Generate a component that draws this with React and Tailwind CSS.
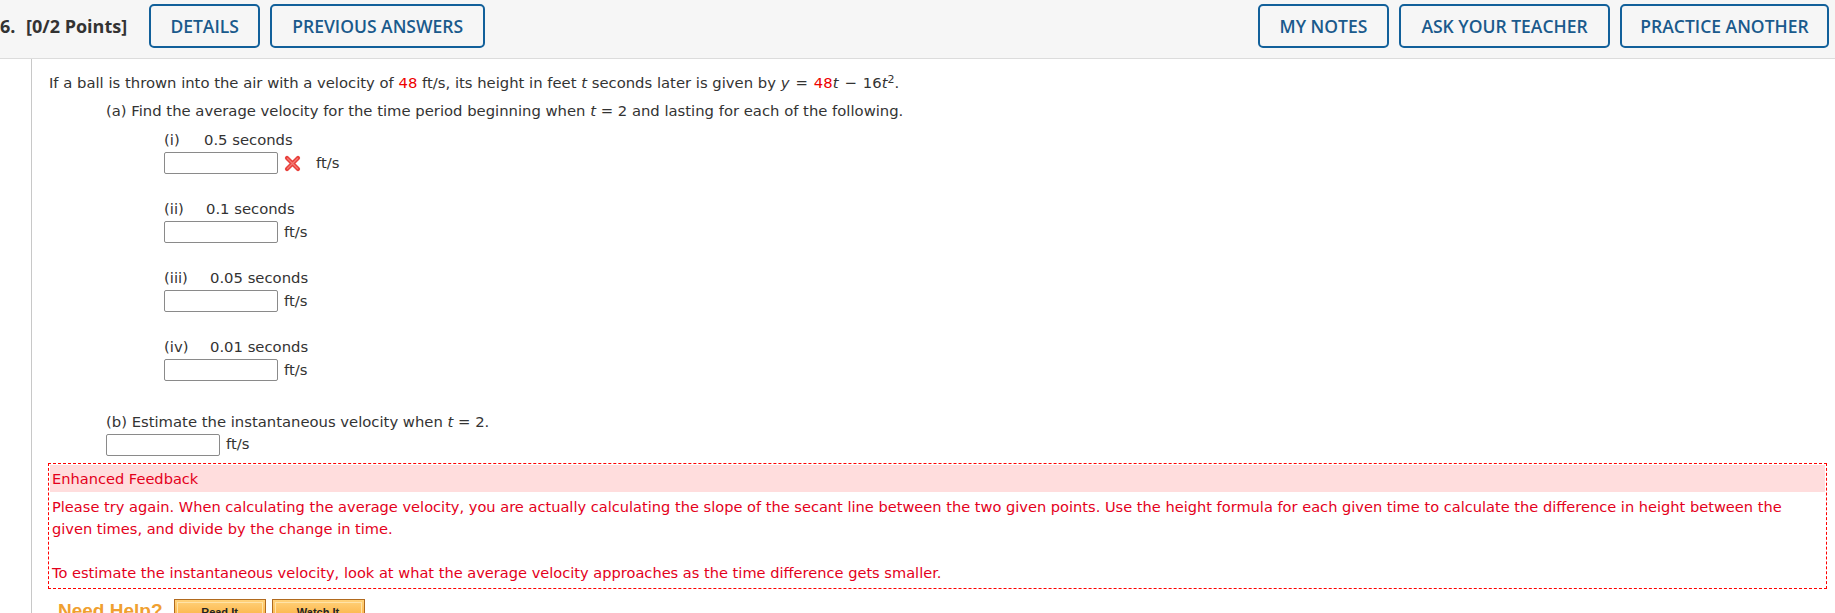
import React from 'react';

const body = { fontFamily: '"DejaVu Sans", Verdana, sans-serif' };
const head = { fontFamily: '"Open Sans", "Noto Sans", sans-serif' };
const arial = { fontFamily: '"Liberation Sans", Arial, sans-serif' };

function HeadButton({ children, className = '' }) {
  return (
    <div
      className={`h-[44px] flex items-center justify-center border-2 border-[#12609a] rounded-[5px] text-[#1a5a8c] text-[17.5px] font-semibold uppercase ${className}`}
    >
      {children}
    </div>
  );
}

function WrongMark() {
  return (
    <svg width="17" height="17" viewBox="0 0 17 17" className="ml-[6px]">
      <path d="M3 3 L14 14 M14 3 L3 14" stroke="#e8413c" strokeWidth="4.2" strokeLinecap="round" />
      <path d="M3.5 3.5 L13.5 13.5 M13.5 3.5 L3.5 13.5" stroke="#f47a74" strokeWidth="1.2" strokeLinecap="round" />
    </svg>
  );
}

function AnswerBox() {
  return <div className="w-[114px] h-[22px] border border-[#8a8a8a] rounded-[2px] bg-white shrink-0" />;
}

function Part({ roman, time, gap, wrong }) {
  return (
    <div className="mb-[24px]">
      <div className="h-[22px] leading-[22px] flex">
        <span className={gap}>{roman}</span>
        <span>{time}</span>
      </div>
      <div className="mt-[1px] h-[22px] flex items-center">
        <AnswerBox />
        {wrong ? (
          <>
            <WrongMark />
            <span className="ml-[15px]">ft/s</span>
          </>
        ) : (
          <span className="ml-[6px]">ft/s</span>
        )}
      </div>
    </div>
  );
}

function HelpButton({ children, className = '' }) {
  return (
    <div className={`h-[26px] border border-[#b06a1f] bg-gradient-to-b from-[#ffd27a] to-[#f9a623] p-[2px] ${className}`}>
      <div
        className="h-full border border-[#ffe3a8] text-[11px] font-bold text-center leading-[18px] text-[#222]"
        style={arial}
      >
        {children}
      </div>
    </div>
  );
}

export default function App() {
  return (
    <div className="w-[1835px] h-[613px] overflow-hidden bg-white text-[#333]">
      <header className="h-[59px] bg-[#f6f6f6] border-b border-[#dcdcdc] flex items-start pt-[4px] pr-[6px]" style={head}>
        <div className="h-[44px] flex items-center text-[18px] font-bold text-[#333] whitespace-nowrap">
          <span className="w-[26px]">6.</span>
          <span>[0/2 Points]</span>
        </div>
        <HeadButton className="ml-[22px] w-[111px]">Details</HeadButton>
        <HeadButton className="ml-[10px] w-[215px]">Previous Answers</HeadButton>
        <div className="flex-1" />
        <HeadButton className="w-[131px]">My Notes</HeadButton>
        <HeadButton className="ml-[10px] w-[211px]">Ask Your Teacher</HeadButton>
        <HeadButton className="ml-[10px] w-[209px]">Practice Another</HeadButton>
      </header>

      <div className="flex h-[554px]">
        <div className="w-[32px] border-r border-[#c8c8c8] shrink-0" />
        <div className="flex-1 pl-[16px] pr-[8px] pt-[13px] text-[14.8px]" style={body}>
          <p className="ml-[1px] h-[22px] leading-[22px] whitespace-nowrap">
            If a ball is thrown into the air with a velocity of <span className="text-[#e00]">48</span> ft/s, its height in
            feet <i>t</i> seconds later is given by <i>y</i>
            <span className="mx-[6px]">=</span>
            <span className="text-[#e00]">48</span>
            <i>t</i>
            <span className="mx-[6px]">&minus;</span>
            16<i>t</i>
            <sup className="text-[11px]">2</sup>.
          </p>

          <div className="ml-[58px]">
            <p className="mt-[6px] h-[22px] leading-[22px] whitespace-nowrap">
              (a) Find the average velocity for the time period beginning when <i>t</i> = 2 and lasting for each of the
              following.
            </p>
            <div className="ml-[58px] mt-[7px]">
              <Part roman="(i)" time="0.5 seconds" gap="w-[40px]" wrong />
              <Part roman="(ii)" time="0.1 seconds" gap="w-[42px]" />
              <Part roman="(iii)" time="0.05 seconds" gap="w-[46px]" />
              <Part roman="(iv)" time="0.01 seconds" gap="w-[46px]" />
            </div>

            <p className="mt-[30px] h-[22px] leading-[22px] whitespace-nowrap">
              (b) Estimate the instantaneous velocity when <i>t</i> = 2.
            </p>
            <div className="h-[23px] flex items-center">
              <AnswerBox />
              <span className="ml-[6px]">ft/s</span>
            </div>
          </div>

          <div className="mt-[7px] border border-dashed border-[#f00] p-[1px] text-[#e4001b] text-[14.6px] whitespace-nowrap">
            <div className="h-[27px] leading-[27px] bg-[#ffdddd] pl-[2px]">Enhanced Feedback</div>
            <div className="pl-[2px] pt-[4px] pb-[3px] leading-[22px]">
              Please try again. When calculating the average velocity, you are actually calculating the slope of the secant
              line between the two given points. Use the height formula for each given time to calculate the difference in
              height between the
              <br />
              given times, and divide by the change in time.
              <br />
              <br />
              To estimate the instantaneous velocity, look at what the average velocity approaches as the time difference gets
              smaller.
            </div>
          </div>

          <div className="mt-[10px] flex items-start">
            <span className="ml-[10px] text-[19px] font-bold text-[#f0a030] leading-[20px] pt-[2px]" style={arial}>
              Need Help?
            </span>
            <HelpButton className="ml-[11px] w-[92px]">Read It</HelpButton>
            <HelpButton className="ml-[6px] w-[93px]">Watch It</HelpButton>
          </div>
        </div>
      </div>
    </div>
  );
}
